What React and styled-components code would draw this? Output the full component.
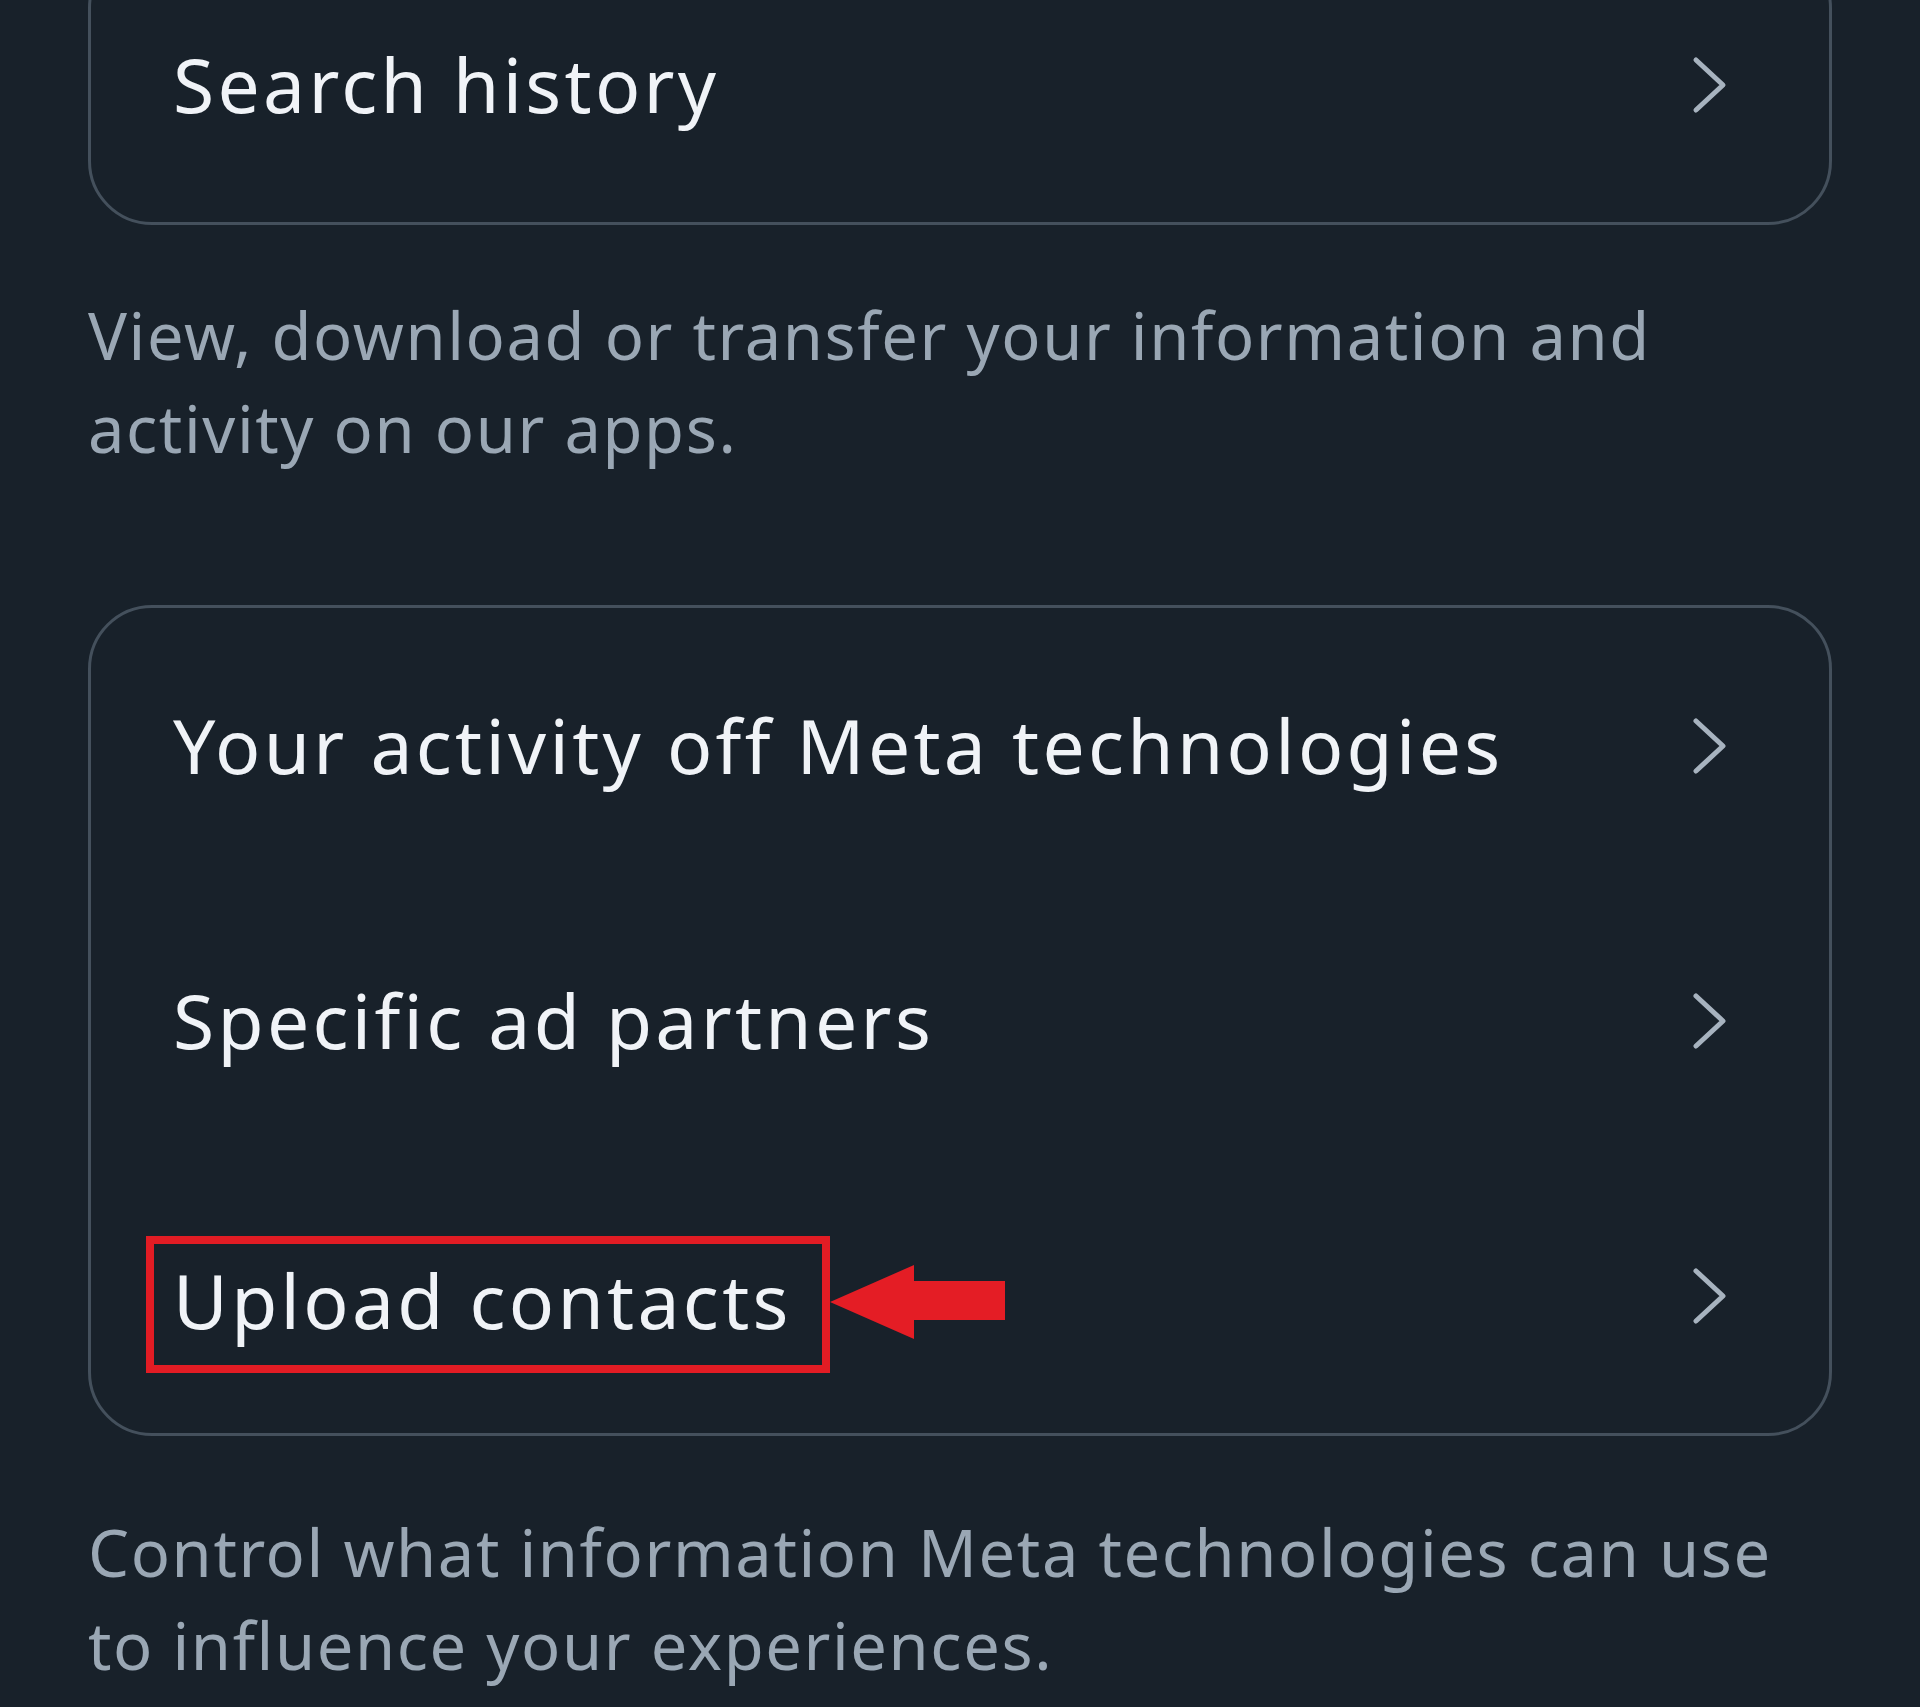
import React from 'react'
import styled, { createGlobalStyle } from 'styled-components'

const GlobalStyle = createGlobalStyle`
  html, body {
    margin: 0;
    padding: 0;
    background: #18212a;
  }
  body {
    font-family: "Noto Sans", "Open Sans", sans-serif;
    overflow: hidden;
  }
`

const Chevron = () => (
  <svg width="36" height="58" viewBox="0 0 36 58" fill="none">
    <polyline
      points="4,4 31,29 4,54"
      stroke="#a7b3bf"
      strokeWidth="5"
      strokeLinecap="round"
      strokeLinejoin="round"
    />
  </svg>
)

const RedArrow = () => (
  <svg width="176" height="74" viewBox="0 0 176 74">
    <polygon
      points="0,37 84,0 84,16 175,16 175,55 84,55 84,74"
      fill="#e41d25"
    />
  </svg>
)

const sections = [
  {
    id: 1,
    rows: [{ id: 'search', label: 'Search history' }],
    note: 'View, download or transfer your information and activity on our apps.',
    first: true,
  },
  {
    id: 2,
    rows: [
      { id: 'off', label: 'Your activity off Meta technologies' },
      { id: 'partners', label: 'Specific ad partners' },
      { id: 'upload', label: 'Upload contacts', highlight: true },
    ],
    note: 'Control what information Meta technologies can use to influence your experiences.',
  },
]

const App = () => {
  return (
    <>
      <GlobalStyle />
      <Page>
        {sections.map((section) => (
          <Section key={section.id} $first={section.first}>
            <Card>
              {section.rows.map((row) => (
                <Row key={row.id}>
                  {row.highlight ? (
                    <LabelGroup>
                      <Highlight>
                        <Label>{row.label}</Label>
                      </Highlight>
                      <ArrowWrap>
                        <RedArrow />
                      </ArrowWrap>
                    </LabelGroup>
                  ) : (
                    <Label>{row.label}</Label>
                  )}
                  <Chevron />
                </Row>
              ))}
            </Card>
            <Note $first={section.first}>{section.note}</Note>
          </Section>
        ))}
      </Page>
    </>
  )
}

const Page = styled.div`
  width: 1920px;
  height: 1707px;
  box-sizing: border-box;
  padding: 0 88px;
  background: #18212a;
  overflow: hidden;
`

const Section = styled.section`
  display: flex;
  flex-direction: column;
  margin-top: ${(p) => (p.$first ? '-56px' : '130px')};
`

const Card = styled.div`
  display: flex;
  flex-direction: column;
  border: 3px solid #44505c;
  border-radius: 64px;
`

const Row = styled.div`
  height: 275px;
  display: flex;
  align-items: center;
  justify-content: space-between;
  padding: 0 101px 0 82px;
`

const Label = styled.span`
  font-size: 75px;
  line-height: 1;
  color: #f0f3f7;
  letter-spacing: 3.3px;
  white-space: nowrap;
`

const LabelGroup = styled.div`
  display: flex;
  align-items: center;
`

const Highlight = styled.span`
  display: inline-flex;
  align-items: center;
  height: 137px;
  box-sizing: border-box;
  border: 8px solid #e21c24;
  margin-left: -27px;
  padding: 0 30px 8px 19px;
  margin-top: 18px;
`

const ArrowWrap = styled.span`
  display: inline-flex;
  margin-top: 12px;
`

const Note = styled.p`
  margin: ${(p) => (p.$first ? '64px' : '70px')} 0 0;
  font-size: 65px;
  line-height: 93px;
  letter-spacing: 1.6px;
  color: #9aa7b4;
`

export default App
